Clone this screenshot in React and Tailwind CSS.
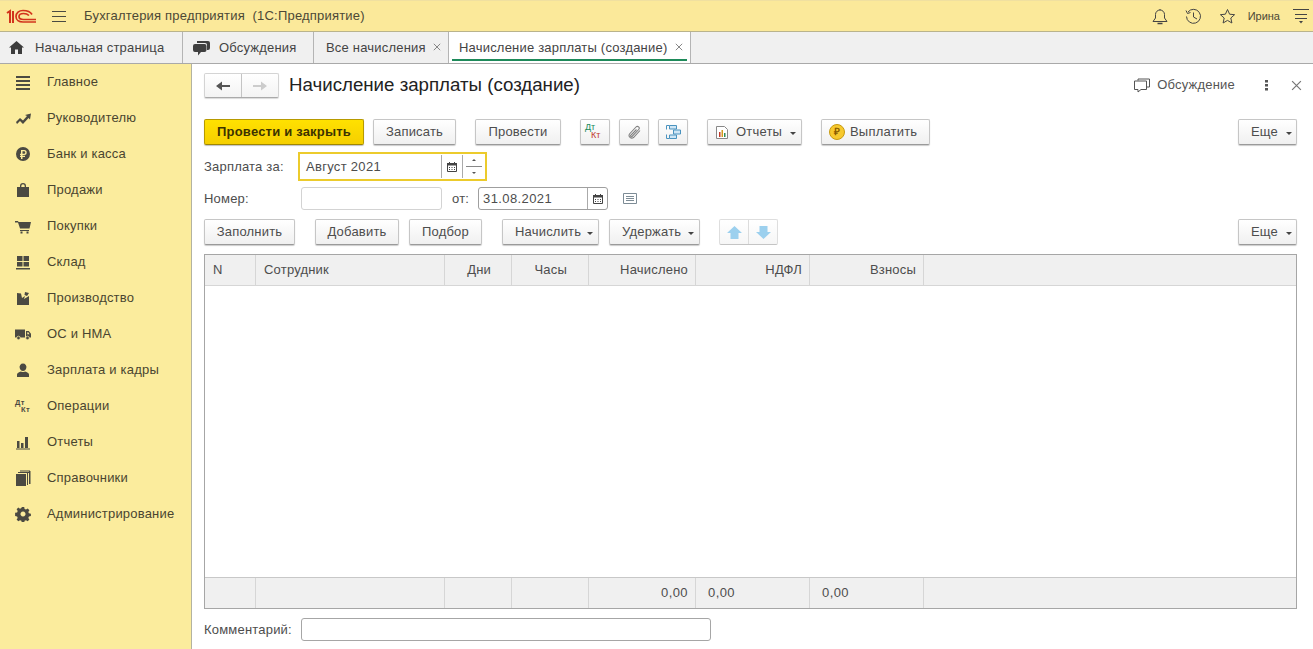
import React from "react";

const F = "font-['Liberation_Sans',Arial,sans-serif]";
const D = "#4b4a42";

function Btn({ w, ml = "", pl = "justify-center", gap = "gap-[5px]", primary, children }) {
  return (
    <div className={`${w} ${ml} ${pl} ${gap} h-[26px] shrink-0 flex items-center rounded-[2px] text-[13px] tracking-[0.2px] border ${primary ? "border-[#b79a00] bg-linear-to-b from-[#ffe100] to-[#f5cf00] border-b-[#a08700] text-[#3c3300] font-bold shadow-[0_1px_1px_rgba(0,0,0,0.25)]" : "border-[#c6c6c6] border-b-[#9a9a9a] bg-linear-to-b from-white to-[#f0f0f0] text-[#4d4d4d] shadow-[0_1px_1px_rgba(0,0,0,0.2)]"}`}>
      {children}
    </div>
  );
}

const Caret = () => <span className="w-0 h-0 mt-[2px] border-x-[3px] border-x-transparent border-t-[3px] border-t-[#444]" />;

function Cal({ size = 10 }) {
  return (
    <svg width={size} height={size} viewBox="0 0 10 10" fill="#444">
      <path d="M0.5 1.5h9v8h-9z" fill="none" stroke="#444" />
      <path d="M0 1h10v2.5H0zM2 0h1v2H2zM7 0h1v2H7z" />
      <path d="M2 5h1v1H2zM4.5 5h1v1h-1zM7 5h1v1H7zM2 7h1v1H2zM4.5 7h1v1h-1zM7 7h1v1H7z" />
    </svg>
  );
}

const icons = {
  main: <path d="M1 2h14v2H1zM1 6h14v2H1zM1 10h14v2H1zM1 14h14v2H1z" />,
  chart: <path d="M1 12l4-4 3 2.500 4-4.500-2-1 6-1.500-1 6-1.500-1.500L8 14 5 11l-3 3z" />,
  bank: <path fillRule="evenodd" d="M8 1a7 7 0 1 0 0 14A7 7 0 0 0 8 1zM6 4h3.200a2.500 2.500 0 0 1 0 5H7.500v.8H10V11H7.500v2H6v-2H5V9.800h1V9H5V7.700h1zm1.500 1.300v2.400h1.600a1.200 1.200 0 0 0 0-2.400z" />,
  bag: <path fillRule="evenodd" d="M2 5h3V4a3 3 0 0 1 6 0v1h3v10H2zM6.300 5h3.400V4a1.700 1.700 0 0 0-3.400 0z" />,
  cart: <path d="M0 3h3l.5 1H16l-1.500 6.500H5L3 4.500H0zM5 12h9v1H5zM5.500 13.500h2v2h-2zM11.500 13.500h2v2h-2z" />,
  store: <path d="M2 2h5.500v5H2zM8.500 2H14v5H8.500zM2 8h5.500v4.500H2zM8.500 8H14v4.500H8.500zM1 14h14v1.500H1z" />,
  factory: <path d="M2 15V3l4 .5L7 8l3-2-1 3 5-3v9zM10 2l4 1-2 3-2.500-1z" />,
  truck: (
    <>
      <path d="M0 3.500h10v8H0z" />
      <path fillRule="evenodd" d="M11 5h2.800L16 7.800v3.700h-5zM12.300 6.300v1.900h2.200l-1.200-1.900z" />
      <circle cx="3.500" cy="12" r="1.800" stroke="#fbec9d" strokeWidth=".7" />
      <circle cx="12.500" cy="12" r="1.800" stroke="#fbec9d" strokeWidth=".7" />
    </>
  ),
  person: <path d="M8 1.500a3.500 3.500 0 0 1 3.300 4.500C11 7.500 10 9 8 9S5 7.500 4.700 6A3.500 3.500 0 0 1 8 1.500zM2 15v-2.500C2 11 4 10 6 9.500c1 .8 3 .8 4 0 2 .5 4 1.500 4 3V15z" />,
  reports: <path d="M2 7h2.500v7H2zM6 9h2.500v5H6zM10 3h3v11h-3zM1 14.500h14v1H1z" />,
  book: <path d="M1 4h10v12H1zM12 3h1v12h-1zM3 2h11v1H3zM14 1h1.500v13H14zM5 .5h10v1H5z" />,
  gear: <path fillRule="evenodd" d="M6.800 1h2.400l.4 2 1.400.6 1.700-1.100 1.700 1.700-1.100 1.700.6 1.400 2 .4v2.400l-2 .4-.6 1.400 1.100 1.700-1.700 1.700-1.700-1.100-1.400.6-.4 2H6.800l-.4-2-1.400-.6-1.700 1.100-1.700-1.700 1.100-1.700-.6-1.400-2-.4V6.800l2-.4.6-1.400-1.100-1.700 1.700-1.700 1.700 1.100 1.400-.6zM8 5.500a2.500 2.500 0 1 0 .01 0z" />,
};

const menu = [
  ["Главное", "main"], ["Руководителю", "chart"], ["Банк и касса", "bank"], ["Продажи", "bag"],
  ["Покупки", "cart"], ["Склад", "store"], ["Производство", "factory"], ["ОС и НМА", "truck"],
  ["Зарплата и кадры", "person"], ["Операции", "dtkt"], ["Отчеты", "reports"], ["Справочники", "book"],
  ["Администрирование", "gear"],
];

function Row({ n, i }) {
  return (
    <div className="h-[36px] flex items-center">
      <span className="w-[47px] shrink-0 pl-[15px] flex items-center">
        {i === "dtkt" ? (
          <span className="block w-[16px] h-[14px] font-bold text-[7.5px] leading-[7px] tracking-[0.3px] text-[#4b4a42]">
            <span className="block">Дт</span>
            <span className="block ml-[6px]">Кт</span>
          </span>
        ) : (
          <svg width="16" height="16" viewBox="0 0 16 16" fill={D}>{icons[i]}</svg>
        )}
      </span>
      <span className="text-[13px] text-[#4a4530] tracking-[0.2px]">{n}</span>
    </div>
  );
}

function X({ s, c }) {
  return (
    <svg width={s} height={s} viewBox="0 0 10 10" stroke={c} strokeWidth="1.100" className="block"><path d="M1 1l8 8M9 1l-8 8" /></svg>
  );
}

function Tab({ w, icon, children, closeCls, active }) {
  return (
    <div className={`${w} h-full shrink-0 relative flex items-center border-r border-[#b4b4b4] text-[13px] tracking-[0.2px] text-[#444] ${active ? "bg-white" : ""}`}>
      {icon}
      {children}
      {closeCls && <span className={`absolute top-[11px] ${closeCls}`}><X s={8} c="#777" /></span>}
      {active && <span className="absolute left-[3px] right-[3px] bottom-[2px] h-[2px] bg-[#1e8a5a]" />}
    </div>
  );
}

const cols = "grid grid-cols-[51px_189px_67px_77px_107px_114px_114px_1fr]";
const cellB = "border-r border-[#d6d6d6] flex items-center";

export default function App() {
  return (
    <div className={`${F} w-[1313px] h-[649px] overflow-hidden bg-white flex flex-col`}>
      <header className="h-[32px] shrink-0 bg-[#fbe99a] border-t border-[#f0e0a0] border-b border-b-[#b9b38c] flex items-center text-[13px] tracking-[0.2px] text-[#4c4836]">
        <svg width="31" height="15" viewBox="0 0 31 15" className="ml-[6px]" fill="none" stroke="#d2341c">
          <path d="M1 4l3-2v12M7 2v12" strokeWidth="2" />
          <path d="M26 5.500C24 2 20 1.500 17 1.500 13 1.500 10 4 10 7.500S13 13 17 13h13" strokeWidth="1.700" />
          <path d="M23 6.500C21.500 5 19.500 4.500 17.500 4.500 15 4.500 13 5.500 13 7.500S15 10.500 17.500 10.500H30" strokeWidth="1.700" />
        </svg>
        <svg width="14" height="11" viewBox="0 0 14 11" stroke="#4a4a42" className="ml-[15px]"><path d="M0 .5h14M0 5.500h14M0 10.500h14" /></svg>
        <span className="ml-[18px]">Бухгалтерия предприятия&nbsp; (1С:Предприятие)</span>
        <div className="ml-auto flex items-center">
          <svg width="16" height="17" viewBox="0 0 16 17" fill="none" stroke="#444"><path d="M1 13.500h14L12.500 10V6.500a4.500 4.500 0 0 0-9 0V10zM8 1v1" /><path d="M5.500 15.500h5" strokeWidth="1.500" /></svg>
          <svg width="17" height="17" viewBox="0 0 17 17" fill="none" stroke="#444" className="ml-[17px]"><path d="M3 4a7 7 0 1 1-1.500 4.500M1 2.500l1.500 3 3-1M8.500 4.500V9l3.500 2" /></svg>
          <svg width="17" height="17" viewBox="0 0 17 17" fill="none" stroke="#444" className="ml-[17px]"><path d="M8.500 1.500l2.100 4.700 5 .5-3.800 3.300 1.100 5-4.400-2.600-4.400 2.600 1.100-5L1.400 6.700l5-.5z" /></svg>
          <span className="ml-[12px] text-[11px] tracking-normal">Ирина</span>
          <svg width="16" height="15" viewBox="0 0 16 15" fill="#444" stroke="#444" className="ml-[13px] mr-[4px]"><path d="M0 .5h16M2 5.500h12M2 9.500h12" fill="none" /><path d="M6 12h4l-2 2.500z" stroke="none" /></svg>
        </div>
      </header>

      <nav className="h-[32px] shrink-0 bg-[#f0f0f0] border-b border-[#a9a9a9] flex">
        <Tab w="w-[183px]" icon={<svg width="15" height="13" viewBox="0 0 15 13" fill="#3c3c3c" className="ml-[9px] mr-[11px]"><path d="M7.500 0L15 6.500h-2V13H9V8.500H6V13H2V6.500H0z" /></svg>}>Начальная страница</Tab>
        <Tab w="w-[131px]" icon={<svg width="17" height="16" viewBox="0 0 17 16" fill="#3f3f3f" className="ml-[10px] mr-[9px]"><path d="M4 1h11a2 2 0 0 1 2 2v5a2 2 0 0 1-2 2h-1V5a2 2 0 0 0-2-2H4z" /><path d="M2 4h9.500a2 2 0 0 1 2 2v4a2 2 0 0 1-2 2H8l-3 3.500V12H2a2 2 0 0 1-2-2V6a2 2 0 0 1 2-2z" /></svg>}>Обсуждения</Tab>
        <Tab w="w-[135px]" closeCls="right-[7px]"><span className="ml-[12px]">Все начисления</span></Tab>
        <Tab w="w-[242px]" closeCls="right-[7px]" active><span className="ml-[10px]">Начисление зарплаты (создание)</span></Tab>
      </nav>

      <div className="flex-1 flex min-h-0">
        <aside className="w-[192px] shrink-0 bg-[#fbec9d] border-r border-[#b3b3a0]">
          {menu.map(([n, i]) => <Row key={n} n={n} i={i} />)}
        </aside>

        <main className="flex-1 min-w-0 pl-[12px] pr-[16px] text-[13px] tracking-[0.2px] text-[#4d4d4d]">
          <div className="h-[44px] pt-[9px] flex items-start">
            <div className="flex w-[75px] h-[25px] rounded-[2px] border border-[#d4d4d4] border-b-[#aaa] shadow-[0_1px_1px_rgba(0,0,0,0.15)] bg-linear-to-b from-white to-[#f3f3f3]">
              <div className="w-[37px] border-r border-[#c4c4c4] flex items-center justify-center">
                <svg width="14" height="10" viewBox="0 0 14 10" fill="#555"><path d="M0 5l6-4.500V4h8v2H6v3.500z" /></svg>
              </div>
              <div className="flex-1 flex items-center justify-center">
                <svg width="14" height="10" viewBox="0 0 14 10" fill="#ccc"><path d="M14 5L8 .5V4H0v2h8v3.500z" /></svg>
              </div>
            </div>
            <h1 className="ml-[10px] text-[18.7px] leading-[24px] tracking-normal text-[#222] font-normal">Начисление зарплаты (создание)</h1>
            <div className="ml-auto -mr-[6px] flex items-center h-[24px] text-[#555]">
              <svg width="16" height="15" viewBox="0 0 16 15" fill="none" stroke="#555"><path d="M4 2.500V1h11.500v8H13" /><path d="M.5 3h12v8.500H7l-3 2.500v-2.500H.5z" /></svg>
              <span className="ml-[7px]">Обсуждение</span>
              <svg width="3" height="11" viewBox="0 0 3 11" fill="#555" className="ml-[30px]"><path d="M0 0h3v2.500H0zM0 4h3v2.500H0zM0 8h3v2.500H0z" /></svg>
              <span className="ml-[23px] mr-[1px] flex"><X s={11} c="#777" /></span>
            </div>
          </div>

          <div className="mt-[11px] flex">
            <Btn w="w-[160px]" primary>Провести и закрыть</Btn>
            <Btn w="w-[83px]" ml="ml-[9px]">Записать</Btn>
            <Btn w="w-[86px]" ml="ml-[19px]">Провести</Btn>
            <Btn w="w-[30px]" ml="ml-[19px]">
              <span className="block w-[20px] h-[18px] text-[9px] leading-[8px] font-normal tracking-normal">
                <span className="block text-[#168a5a]">Дт</span>
                <span className="block ml-[6px] text-[#c0392b]">Кт</span>
              </span>
            </Btn>
            <Btn w="w-[30px]" ml="ml-[9px]">
              <svg width="15" height="15" viewBox="0 0 15 15" fill="none" stroke="#808080" strokeWidth="1.100"><path d="M13 5.500L6.500 12.500a2.700 2.700 0 0 1-4-3.500L9 2a1.800 1.800 0 0 1 2.700 2.500L5 11.500a.9.9 0 0 1-1.300-1.200L9.500 4.500" /></svg>
            </Btn>
            <Btn w="w-[30px]" ml="ml-[9px]">
              <svg width="15" height="16" viewBox="0 0 15 16" fill="#cfe6f5" stroke="#4a93bf"><path d="M.5 5.500V1.500h3M.5 10.500v4h3" fill="none" /><path d="M3.500 1.500h7V5h-7zM7.500 6h7v4h-7zM3.500 11h7v3.500h-7z" /></svg>
            </Btn>
            <Btn w="w-[95px]" ml="ml-[19px]" pl="justify-start pl-[8px]" gap="gap-[8px]">
              <svg width="12" height="13" viewBox="0 0 12 13"><path d="M.5.500h8l3 3v9H.5z" fill="#fff" stroke="#888" /><path d="M3 6h1.500v5H3z" fill="#c0392b" /><path d="M5.500 4H7v7H5.500z" fill="#d39a1c" /><path d="M8 7h1.500v4H8z" fill="#2e8b57" /></svg>
              <span>Отчеты</span><Caret />
            </Btn>
            <Btn w="w-[109px]" ml="ml-[19px]" pl="justify-start pl-[7px]">
              <span className="w-[16px] h-[16px] rounded-full bg-[#f7c92e] border border-[#c79a10] text-[10px] leading-none font-bold text-[#8a5c00] flex items-center justify-center tracking-normal">₽</span>
              <span>Выплатить</span>
            </Btn>
            <Btn w="w-[59px]" ml="ml-auto" pl="justify-start pl-[12px]" gap="gap-[8px]">Еще<Caret /></Btn>
          </div>

          <div className="mt-[7px] h-[29px] flex items-center">
            <span className="w-[94px] shrink-0">Зарплата за:</span>
            <div className="w-[189px] h-[29px] border-2 border-[#eccb2c] flex items-center">
              <span className="ml-[6px] flex-1 tracking-[0.3px]">Август 2021</span>
              <span className="w-[21px] h-[23px] border-l border-[#aaa] flex items-center justify-center"><Cal /></span>
              <span className="w-[23px] h-[23px] border-l border-[#aaa] relative flex flex-col items-center justify-between py-[4px]">
                <span className="w-0 h-0 border-x-[2px] border-x-transparent border-b-[2px] border-b-[#555]" />
                <span className="absolute left-[3px] right-[3px] top-[11px] h-px bg-[#888]" />
                <span className="w-0 h-0 border-x-[2px] border-x-transparent border-t-[2px] border-t-[#555]" />
              </span>
            </div>
          </div>

          <div className="mt-[6px] h-[23px] flex items-center">
            <span className="w-[97px] shrink-0">Номер:</span>
            <div className="w-[141px] h-[23px] rounded-[3px] border border-[#d3d3d3]" />
            <span className="ml-[10px] w-[26px]">от:</span>
            <div className="w-[130px] h-[23px] rounded-[3px] border border-[#9f9f9f] flex items-center">
              <span className="ml-[4px] flex-1 tracking-[0.4px]">31.08.2021</span>
              <span className="w-[20px] h-full border-l border-[#aaa] flex items-center justify-center"><Cal /></span>
            </div>
            <svg width="14" height="11" viewBox="0 0 14 11" fill="none" stroke="#7d8c96" className="ml-[15px]"><path d="M.5.500h13v10H.5zM3 3.500h8M3 5.500h8M3 7.500h8" /></svg>
          </div>

          <div className="mt-[9px] flex">
            <Btn w="w-[91px]">Заполнить</Btn>
            <Btn w="w-[84px]" ml="ml-[20px]">Добавить</Btn>
            <Btn w="w-[73px]" ml="ml-[10px]">Подбор</Btn>
            <Btn w="w-[97px]" ml="ml-[20px]" pl="justify-start pl-[12px]" gap="gap-[6px]">Начислить<Caret /></Btn>
            <Btn w="w-[91px]" ml="ml-[10px]" pl="justify-start pl-[12px]" gap="gap-[7px]">Удержать<Caret /></Btn>
            <div className="ml-[19px] w-[59px] h-[26px] flex rounded-[2px] border border-[#dedede] border-b-[#c4c4c4] bg-linear-to-b from-white to-[#f6f6f6]">
              <span className="flex-1 border-r border-[#dcdcdc] flex items-center justify-center">
                <svg width="15" height="13" viewBox="0 0 15 13" fill="#9cd0ee"><path d="M7.500 0L15 7h-3.500v6h-8V7H0z" /></svg>
              </span>
              <span className="flex-1 flex items-center justify-center">
                <svg width="15" height="13" viewBox="0 0 15 13" fill="#9cd0ee"><path d="M7.500 13L15 6h-3.500V0h-8v6H0z" /></svg>
              </span>
            </div>
            <Btn w="w-[59px]" ml="ml-auto" pl="justify-start pl-[12px]" gap="gap-[8px]">Еще<Caret /></Btn>
          </div>

          <div className="mt-[9px] h-[355px] border border-[#a6a6a6] flex flex-col">
            <div className={`${cols} h-[31px] shrink-0 bg-[#f0f0f0] border-b border-[#d6d6d6]`}>
              <div className={`${cellB} pl-[8px]`}>N</div>
              <div className={`${cellB} pl-[8px]`}>Сотрудник</div>
              <div className={`${cellB} justify-end pr-[20px]`}>Дни</div>
              <div className={`${cellB} justify-end pr-[21px]`}>Часы</div>
              <div className={`${cellB} justify-end pr-[7px]`}>Начислено</div>
              <div className={`${cellB} justify-end pr-[7px]`}>НДФЛ</div>
              <div className={`${cellB} justify-end pr-[7px]`}>Взносы</div>
              <div />
            </div>
            <div className="flex-1" />
            <div className={`${cols} h-[31px] shrink-0 bg-[#f0f0f0] border-t border-[#c8c8c8] tracking-[0.4px]`}>
              <div className={cellB} />
              <div className={cellB} />
              <div className={cellB} />
              <div className={cellB} />
              <div className={`${cellB} justify-end pr-[7px]`}>0,00</div>
              <div className={`${cellB} pl-[12px]`}>0,00</div>
              <div className={`${cellB} pl-[12px]`}>0,00</div>
              <div />
            </div>
          </div>

          <div className="mt-[9px] h-[23px] flex items-center">
            <span className="w-[97px] shrink-0">Комментарий:</span>
            <div className="w-[410px] h-[23px] rounded-[3px] border border-[#a6a6a6]" />
          </div>
        </main>
      </div>
    </div>
  );
}
